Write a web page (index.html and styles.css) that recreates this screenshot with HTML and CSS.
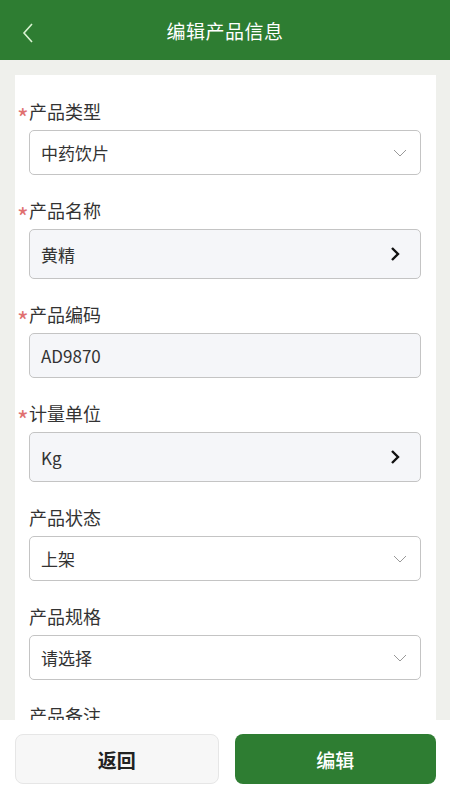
FILE: index.html
```html
<!DOCTYPE html>
<html lang="zh-CN">
<head>
    <meta charset="UTF-8">
    <meta name="viewport" content="width=device-width, initial-scale=1.0">
    <title>编辑产品信息</title>
    <link rel="stylesheet" href="styles.css">
</head>
<body>
    <!-- Top navigation bar -->
    <header class="nav-bar">
        <span class="nav-back">
            <svg width="14" height="22" viewBox="0 0 14 22"><path d="M11 2 L3 11 L11 20" fill="none" stroke="#d9f3d2" stroke-width="1.6"/></svg>
        </span>
        <h1 class="nav-title">编辑产品信息</h1>
    </header>

    <main class="page">
        <form class="form-card">
            <div class="field">
                <label class="field-label"><span class="required">*</span>产品类型</label>
                <div class="field-box select">
                    <span>中药饮片</span>
                    <svg class="icon-down" width="14" height="8" viewBox="0 0 14 8"><path d="M1 1 L7 7 L13 1" fill="none" stroke="#999" stroke-width="1"/></svg>
                </div>
            </div>
            <div class="field">
                <label class="field-label"><span class="required">*</span>产品名称</label>
                <div class="field-box picker">
                    <span>黄精</span>
                    <svg class="icon-right" width="10" height="16" viewBox="0 0 10 16"><path d="M2 2 L8 8 L2 14" fill="none" stroke="#111" stroke-width="2.4"/></svg>
                </div>
            </div>
            <div class="field">
                <label class="field-label"><span class="required">*</span>产品编码</label>
                <div class="field-box readonly">
                    <span>AD9870</span>
                </div>
            </div>
            <div class="field">
                <label class="field-label"><span class="required">*</span>计量单位</label>
                <div class="field-box picker">
                    <span>Kg</span>
                    <svg class="icon-right" width="10" height="16" viewBox="0 0 10 16"><path d="M2 2 L8 8 L2 14" fill="none" stroke="#111" stroke-width="2.4"/></svg>
                </div>
            </div>
            <div class="field">
                <label class="field-label">产品状态</label>
                <div class="field-box select">
                    <span>上架</span>
                    <svg class="icon-down" width="14" height="8" viewBox="0 0 14 8"><path d="M1 1 L7 7 L13 1" fill="none" stroke="#999" stroke-width="1"/></svg>
                </div>
            </div>
            <div class="field">
                <label class="field-label">产品规格</label>
                <div class="field-box select">
                    <span>请选择</span>
                    <svg class="icon-down" width="14" height="8" viewBox="0 0 14 8"><path d="M1 1 L7 7 L13 1" fill="none" stroke="#999" stroke-width="1"/></svg>
                </div>
            </div>
            <div class="field">
                <label class="field-label">产品备注</label>
                <div class="field-box textarea"></div>
            </div>
        </form>
    </main>

    <!-- Bottom action bar -->
    <footer class="action-bar">
        <button class="btn btn-back">返回</button>
        <button class="btn btn-edit">编辑</button>
    </footer>
</body>
</html>
```

FILE: styles.css
```css
* {
    box-sizing: border-box;
}
body {
    margin: 0;
    background-color: #eff0ec;
    font-family: "Noto Sans CJK SC", "Noto Sans", sans-serif;
    color: #333;
}
.nav-bar {
    position: relative;
    height: 60px;
    background-color: #2e7d32;
    display: flex;
    align-items: center;
    justify-content: center;
}
.nav-back {
    position: absolute;
    left: 21px;
    top: 22px;
    height: 22px;
}
.nav-title {
    margin: 0;
    font-size: 19px;
    font-weight: normal;
    color: #fff;
    letter-spacing: 0.5px;
}
.page {
    padding: 15px 14px 0 15px;
}
.form-card {
    background-color: #fff;
    padding: 25px 15px 40px 14px;
}
.field {
    margin-bottom: 24px;
}
.field-label {
    display: flex;
    align-items: center;
    height: 22px;
    line-height: 22px;
    font-size: 18px;
    color: #333;
    margin-bottom: 8px;
}
.required {
    width: 12px;
    margin-left: -12px;
    color: #e07070;
    font-size: 25px;
    line-height: 22px;
    height: 22px;
    padding-top: 6px;
}
.field-box {
    display: flex;
    align-items: center;
    justify-content: space-between;
    height: 45px;
    padding: 0 13px 0 11px;
    border: 1px solid #c4c4c4;
    border-radius: 5px;
    font-size: 17px;
    color: #333;
    background-color: #fff;
}
.field-box.picker {
    height: 50px;
    background-color: #f5f6f9;
    padding-right: 20px;
}
.field-box.readonly {
    background-color: #f5f6f9;
}
.field-box.textarea {
    height: 90px;
}
.action-bar {
    position: fixed;
    left: 0;
    right: 0;
    bottom: 0;
    height: 80px;
    background-color: #fff;
    display: flex;
    gap: 16px;
    padding: 14px 14px 16px 15px;
}
.btn {
    flex: 1;
    height: 50px;
    border-radius: 8px;
    font-family: "Noto Sans CJK SC", sans-serif;
    font-size: 19px;
    font-weight: bold;
    cursor: pointer;
}
.btn-back {
    background-color: #f7f7f7;
    border: 1px solid #e6e6e6;
    color: #222;
}
.btn-edit {
    background-color: #2e7d32;
    border: none;
    color: #fff;
    font-weight: 500;
}
```
